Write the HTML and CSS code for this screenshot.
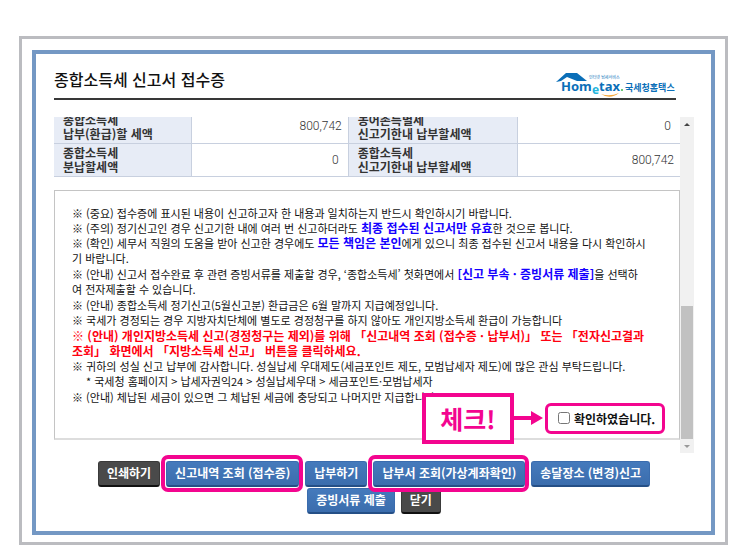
FILE: index.html
```html
<!DOCTYPE html>
<html lang="ko">
<head>
<meta charset="utf-8">
<title>종합소득세 신고서 접수증</title>
<link rel="stylesheet" href="styles.css">
</head>
<body>
<div class="frame">
<main class="window">
  <header class="head">
    <h1>종합소득세 신고서 접수증</h1>
    <svg class="logo" viewBox="0 0 122 26" width="122" height="26" role="img" aria-label="Hometax 국세청홈택스">
      <path d="M2 10 L12 1 H23 L33 9 H23 L13 5 L7 9 Z" fill="#0b6fb8"/>
      <path d="M47 22 Q56 28 65 21 Q56 25 47 22 Z" fill="#f5a83c"/>
      <text class="logo-name" x="7" y="19">Hom</text>
      <text class="logo-e" x="38" y="22">e</text>
      <text class="logo-name" x="45" y="19">tax</text>
      <circle cx="68" cy="18" r="1" fill="#3cb54a"/>
      <text class="logo-tiny" x="35" y="7">인터넷 납세서비스</text>
      <text class="logo-kr" x="71" y="19">국세청홈택스</text>
    </svg>
  </header>

  <div class="scroller">
    <div class="content">
      <div class="clip">
        <table class="amounts">
          <colgroup><col class="c1"><col class="c2"><col class="c3"><col class="c4"></colgroup>
          <tr><th>종합소득세<br>납부(환급)할 세액</th><td>800,742</td><th>농어촌특별세<br>신고기한내 납부할세액</th><td class="zero">0</td></tr>
          <tr><th>종합소득세<br>분납할세액</th><td class="zero">0</td><th>종합소득세<br>신고기한내 납부할세액</th><td>800,742</td></tr>
        </table>
      </div>
      <section class="notice">
        <ul>
          <li>※ (중요) 접수증에 표시된 내용이 신고하고자 한 내용과 일치하는지 반드시 확인하시기 바랍니다.</li>
          <li>※ (주의) 정기신고인 경우 신고기한 내에 여러 번 신고하더라도 <strong>최종 접수된 신고서만 유효</strong>한 것으로 봅니다.</li>
          <li class="wrapped">※ (확인) 세무서 직원의 도움을 받아 신고한 경우에도 <strong>모든 책임은 본인</strong>에게 있으니 최종 접수된 신고서 내용을 다시 확인하시<br>기 바랍니다.</li>
          <li class="wrapped">※ (안내) 신고서 접수완료 후 관련 증빙서류를 제출할 경우, ‘종합소득세’ 첫화면에서 <strong>[신고 부속 · 증빙서류 제출]</strong>을 선택하<br>여 전자제출할 수 있습니다.</li>
          <li>※ (안내) 종합소득세 정기신고(5월신고분) 환급금은 6월 말까지 지급예정입니다.</li>
          <li>※ 국세가 경정되는 경우 지방자치단체에 별도로 경정청구를 하지 않아도 개인지방소득세 환급이 가능합니다</li>
          <li class="wrapped alert">※ (안내) 개인지방소득세 신고(경정청구는 제외)를 위해 「신고내역 조회 (접수증 · 납부서)」 또는 「전자신고결과<br>조회」 화면에서 「지방소득세 신고」 버튼을 클릭하세요.</li>
          <li class="wrapped">※ 귀하의 성실 신고 납부에 감사합니다. 성실납세 우대제도(세금포인트 제도, 모범납세자 제도)에 많은 관심 부탁드립니다.<br><span class="sub">* 국세청 홈페이지 &gt; 납세자권익24 &gt; 성실납세우대 &gt; 세금포인트·모범납세자</span></li>
          <li>※ (안내) 체납된 세금이 있으면 그 체납된 세금에 충당되고 나머지만 지급합니다.</li>
        </ul>
        <div class="confirm">
          <div class="callout"><span class="callout-box">체크!</span><svg width="31" height="16" viewBox="0 0 31 16" aria-hidden="true"><path d="M0 6H17V1L29 8L17 15V10H0Z" fill="#f3058f"/></svg></div>
          <input type="checkbox" id="ok"><label for="ok">확인하였습니다.</label>
        </div>
      </section>
    </div>
    <div class="bar" aria-hidden="true">
      <svg width="14" height="14" viewBox="0 0 14 14"><path d="M4 9L7 6L10 9Z" fill="#444"/></svg>
      <div class="thumb"></div>
      <svg width="14" height="14" viewBox="0 0 14 14"><path d="M4 6L7 9L10 6Z" fill="#999"/></svg>
    </div>
  </div>

  <div class="actions">
    <div class="row">
      <button type="button" class="dark">인쇄하기</button>
      <button type="button" class="marked">신고내역 조회 (접수증)</button>
      <button type="button">납부하기</button>
      <button type="button" class="marked">납부서 조회(가상계좌확인)</button>
      <button type="button">송달장소 (변경)신고</button>
    </div>
    <div class="row">
      <button type="button">증빙서류 제출</button>
      <button type="button" class="dark">닫기</button>
    </div>
  </div>
</main>
</div>
</body>
</html>
```
FILE: styles.css
```css
* { box-sizing: border-box; }

body {
  margin: 0;
  padding: 36px 8px 0 19px;
  background: #fff;
  color: #111;
  font: 11px/15px "Noto Sans CJK KR", sans-serif;
}

.frame { border: 3px solid #bbbcc0; padding: 11px 10px 7px; }
.window { border: 4px solid #7498c4; padding: 0 17px 17px 18px; }

.head {
  display: flex;
  justify-content: space-between;
  align-items: center;
  height: 46px;
  margin-right: 18px;
  border-bottom: 2px solid #383838;
}
h1 { margin: 6px 0 0; font-size: 16px; line-height: 20px; font-weight: 500; color: #111; }
.logo { flex: none; align-self: flex-end; }
.logo-name { font: 700 13px "Noto Sans", sans-serif; fill: #0b6fb8; }
.logo-e { font: 700 12px "Noto Sans", sans-serif; fill: #23b5dc; }
.logo-tiny { font-size: 4px; fill: #0b6fb8; }
.logo-kr { font-size: 9px; font-weight: 700; fill: #0b6fb8; }

.scroller { display: flex; margin-top: 17px; }
.content { flex: 1; min-width: 0; padding-bottom: 13px; }
.clip { overflow: hidden; }

.amounts {
  width: 100%;
  margin-top: -7px;
  border-collapse: collapse;
  table-layout: fixed;
}
.c1 { width: 22%; }
.c2 { width: 25%; }
.c3 { width: 27%; }
.c4 { width: 26%; }
.amounts th, .amounts td {
  height: 33px;
  padding: 1px 6px 0 9px;
  border-bottom: 1px solid #c8d0df;
}
.amounts th {
  background: #e7ecf6;
  border-right: 1px solid #c8d0df;
  text-align: left;
  font-size: 12px;
  line-height: 14px;
  color: #333;
}
.amounts td { text-align: right; font-family: Roboto, sans-serif; font-weight: 300; font-size: 12px; color: #333; }
.amounts td + th { border-left: 1px solid #c8d0df; }
.amounts .zero { padding-right: 9px; }

.notice {
  margin-top: 13px;
  padding: 15px 14px 4px 17px;
  border: 1px solid #c4c4c4;
  border-bottom: 2px solid #ddd;
}
.notice ul { margin: 0; padding: 0; list-style: none; white-space: nowrap; }
.notice li { min-height: 15px; }
.notice .wrapped { margin-bottom: 1px; }
.notice strong { color: #1400ff; font-size: 12px; line-height: 12px; font-weight: 700; }
.alert { color: #ff0010; font-size: 12px; font-weight: 700; }
.sub { padding-left: 14px; }

.confirm {
  position: relative;
  display: flex;
  align-items: center;
  gap: 4px;
  width: 120px;
  height: 31px;
  margin: -2px 0 0 auto;
  padding: 0 6px 0 10px;
  border: 3px solid #f3058f;
  border-radius: 6px;
  background: #fff;
  font-size: 12px;
  font-weight: 700;
  white-space: nowrap;
}
.confirm input { flex: none; width: 12px; height: 12px; margin: 0; }
.callout { position: absolute; right: 100%; top: -13px; display: flex; align-items: center; }
.callout svg { margin-right: 3px; }
.callout-box {
  width: 92px;
  height: 51px;
  border: 4px solid #f3058f;
  background: #fff;
  color: #f3058f;
  font-size: 25px;
  line-height: 42px;
  text-align: center;
}

.bar { display: flex; flex-direction: column; width: 14px; background: #f1f1f1; }
.thumb { height: 133px; margin: auto 1px 0; background: #c1c1c1; }

.actions { display: flex; flex-direction: column; gap: 1px; margin-top: 8px; }
.row { display: flex; justify-content: center; gap: 6px; }
button {
  position: relative;
  height: 26px;
  padding: 0 8px;
  border: 1px solid #3a6cae;
  border-bottom: 2px solid #254f86;
  border-radius: 3px;
  background: linear-gradient(#457abc, #3b6dad);
  color: #fff;
  font: 700 12px/20px "Noto Sans CJK KR", sans-serif;
  white-space: nowrap;
}
.dark { background: #4a4a4a; border-color: #3a3a3a; border-bottom-color: #111; }
.marked::after {
  content: "";
  position: absolute;
  z-index: 1;
  inset: -7px -5px -7px -6px;
  border: 4px solid #f3058f;
  border-radius: 7px;
}
```
